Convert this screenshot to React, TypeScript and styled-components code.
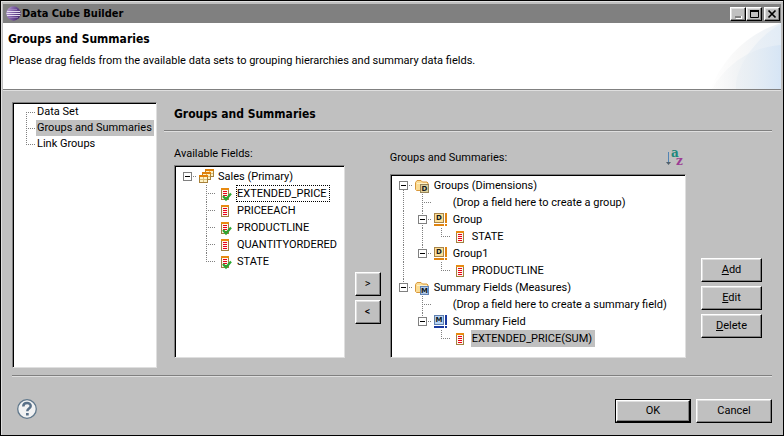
import React from 'react';
import styled, { createGlobalStyle, css } from 'styled-components';

const face = '#c0c0c0';
const shadow = '#808080';
const light = '#dfdfdf';
const headingFont = '"DejaVu Sans Condensed", "DejaVu Sans", sans-serif';

const GlobalStyle = createGlobalStyle`
  * { box-sizing: border-box; }
  body { margin: 0; }
  body, button { font-family: Roboto, sans-serif; font-size: 11px; line-height: 14px; color: #000; }
`;

const Window = styled.div`
  display: flex;
  flex-direction: column;
  min-height: 100vh;
  padding: 1px;
  background: ${face};
  border: 1px solid #000;
  box-shadow: inset 1px 1px 0 ${light};
`;

const TitleBar = styled.div`
  display: flex;
  align-items: center;
  height: 19px;
  margin: 2px 1px 0;
  padding: 0 1px 0 3px;
  background: ${shadow};
`;

const TitleText = styled.h1`
  flex: 1;
  margin: 0;
  padding-left: 1px;
  font: bold 11px/16px ${headingFont};
`;

const raised = css`
  background: ${face};
  border: 1px solid;
  border-color: #fff #000 #000 #fff;
  box-shadow: inset -1px -1px 0 ${shadow}, inset 1px 1px 0 ${light};
`;

const WindowButton = styled.button<{ $apart?: boolean }>`
  ${raised}
  display: grid;
  place-items: center;
  width: 16px;
  height: 14px;
  padding: 0;
  margin-left: ${p => (p.$apart ? 2 : 0)}px;
`;

const Banner = styled.header`
  display: flex;
  justify-content: space-between;
  height: 67px;
  margin: 0 1px;
  background: #fff;
  border-bottom: 1px solid ${shadow};
`;

const BannerText = styled.div`
  padding: 7px 0 0 5px;
`;

const Heading = styled.h2`
  margin: 0;
  font: bold 12px/18px ${headingFont};
`;

const BannerMessage = styled.p`
  margin: 6px 0 0;
  padding-left: 1px;
`;

const Body = styled.div`
  display: flex;
  flex: 1;
  margin: 0 1px;
  padding: 11px 9px 0;
  border-top: 1px solid ${light};
`;

const sunken = css`
  background: #fff;
  border: 1px solid;
  border-color: ${shadow} ${light} ${light} ${shadow};
  box-shadow: inset 1px 1px 0 #000;
`;

const NavPane = styled.nav`
  ${sunken}
  flex: 0 0 145px;
  min-width: 0;
  padding: 1px 0 1px 4px;
`;

const Page = styled.main`
  display: flex;
  flex-direction: column;
  flex: 1;
  margin-left: 7px;
`;

const PageHeading = styled.div`
  padding: 3px 10px 7px;
  border-bottom: 1px solid ${shadow};
  box-shadow: 0 1px 0 ${light};
`;

const PageContent = styled.div`
  display: flex;
  flex: 1;
  padding: 0 10px 10px;
`;

const Column = styled.section<{ $basis: number; $top: number }>`
  display: flex;
  flex-direction: column;
  flex: ${p => p.$basis} 1 ${p => p.$basis}px;
  padding-top: ${p => p.$top}px;
`;

const ColumnHeader = styled.div<{ $gap: number }>`
  display: flex;
  align-items: center;
  justify-content: space-between;
  margin-bottom: ${p => p.$gap}px;
  padding-right: 2px;
`;

const TreeBox = styled.div`
  ${sunken}
  flex: 1;
  padding: 2px 3px;
`;

const Row = styled.div<{ $height: number }>`
  display: flex;
  align-items: center;
  height: ${p => p.$height}px;
`;

type Guide = 'blank' | 'pass' | 'tee' | 'end' | 'root' | 'top';

const across = 'repeating-linear-gradient(90deg, #808080 0 1px, transparent 1px 2px)';
const down = 'repeating-linear-gradient(180deg, #808080 0 1px, transparent 1px 2px)';

const guideImage: Record<Guide, string> = {
  blank: 'none',
  pass: `${down} 9px 0 / 1px 100% no-repeat`,
  tee: `${down} 9px 0 / 1px 100% no-repeat, ${across} 9px 50% / 10px 1px no-repeat`,
  end: `${down} 9px 0 / 1px 50% no-repeat, ${across} 9px 50% / 10px 1px no-repeat`,
  root: `${across} 9px 50% / 10px 1px no-repeat`,
  top: `${down} 9px 100% / 1px 50% no-repeat, ${across} 9px 50% / 10px 1px no-repeat`,
};

const GuideCell = styled.span<{ $kind: Guide }>`
  display: flex;
  align-items: center;
  flex: 0 0 19px;
  height: 100%;
  padding-left: 5px;
  background: ${p => guideImage[p.$kind]};
`;

const Expander = styled.button`
  display: grid;
  place-items: center;
  width: 9px;
  height: 9px;
  padding: 0;
  background: #fff;
  border: 1px solid ${shadow};
  &::before { content: ''; width: 5px; height: 1px; background: #000; }
`;

const IconSlot = styled.span`
  display: flex;
  flex: 0 0 16px;
  margin: 0 2px;
`;

const Label = styled.span<{ $state?: 'selected' | 'focused' }>`
  display: flex;
  align-items: center;
  align-self: stretch;
  padding: 0 3px 0 1px;
  white-space: nowrap;
  background: ${p => (p.$state === 'selected' ? face : 'transparent')};
  outline: ${p => (p.$state === 'focused' ? '1px dotted #000' : 'none')};
  outline-offset: -1px;
`;

const NavLink = styled.a<{ $current?: boolean }>`
  padding: 1px 2px 1px 1px;
  white-space: nowrap;
  color: #000;
  text-decoration: none;
  background: ${p => (p.$current ? face : 'transparent')};
`;

const Transfer = styled.div`
  display: flex;
  flex-direction: column;
  gap: 4px;
  align-self: flex-start;
  padding: 141px 9px 0 10px;
`;

const Actions = styled.div`
  display: flex;
  flex-direction: column;
  gap: 4px;
  align-self: flex-start;
  padding: 127px 0 0 15px;
`;

const PushButton = styled.button<{ $width: number; $isDefault?: boolean }>`
  ${raised}
  width: ${p => p.$width}px;
  height: ${p => (p.$isDefault ? 22 : 24)}px;
  padding: 0;
`;

const DefaultFrame = styled.div`
  display: flex;
  border: 1px solid #000;
`;

const Footer = styled.footer`
  display: flex;
  align-items: flex-start;
  gap: 5px;
  margin: 7px 10px 0;
  padding: 23px 0 11px;
  border-top: 1px solid ${shadow};
  box-shadow: inset 0 1px 0 ${light};
`;

const IconButton = styled.button`
  display: flex;
  padding: 0;
  background: none;
  border: 0;
`;

const HelpButton = styled(IconButton)`
  margin: 0 auto 0 5px;
`;

const EclipseLogo = () => (
  <svg width="15" height="15" viewBox="0 0 15 15" aria-hidden="true">
    <defs>
      <linearGradient id="globe" x1="0" x2="1" y1="0" y2="0.3">
        <stop offset="0" stopColor="#c4b2dc" />
        <stop offset="0.4" stopColor="#8a6bb0" />
        <stop offset="1" stopColor="#4a2d74" />
      </linearGradient>
    </defs>
    <circle cx="7.5" cy="7.5" r="7.2" fill="url(#globe)" />
    <path d="M1 5.5h13M.5 7.5h14M1 9.5h13" stroke="#e4dcf0" />
    <path d="M3 3.5h8M3 11.5h9" stroke="#a78ec6" strokeWidth=".7" />
  </svg>
);

const BannerArt = () => (
  <svg width="75" height="66" viewBox="0 0 75 66" aria-hidden="true">
    <defs>
      <linearGradient id="fade" x1="0" x2="1" y1="0" y2="0">
        <stop offset="0" stopColor="#fff" />
        <stop offset="0.4" stopColor="#f8f8f8" />
        <stop offset="1" stopColor="#ebf1f7" />
      </linearGradient>
      <linearGradient id="inner" x1="0" x2="1" y1="0" y2="0">
        <stop offset="0" stopColor="#eff2f5" />
        <stop offset="1" stopColor="#e2ecf6" />
      </linearGradient>
      <linearGradient id="glow" x1="0" x2="1" y1="0" y2="0">
        <stop offset="0" stopColor="#f4f4f4" stopOpacity=".2" />
        <stop offset="0.5" stopColor="#e8eef3" stopOpacity=".7" />
        <stop offset="1" stopColor="#d6e5f5" />
      </linearGradient>
    </defs>
    <path d="M4 66C18 34 42 10 75 0v66z" fill="url(#fade)" />
    <path d="M30 66C28 46 50 14 75 1v65z" fill="url(#inner)" />
    <path d="M6 66C20 42 44 24 75 22v44z" fill="url(#glow)" />
  </svg>
);

const TablesIcon = () => (
  <svg width="16" height="16" viewBox="0 0 16 16" shapeRendering="crispEdges" aria-hidden="true">
    {[[6, 0], [3, 3], [0, 6]].map(([x, y]) => (
      <g key={x}>
        <rect x={x} y={y} width="9" height="8" fill="#a8823c" />
        <rect x={x + 1} y={y + 2} width="7" height="5" fill="#fff2c4" />
        <rect x={x} y={y} width="9" height="2" fill="#e08008" />
        <rect x={x + 1} y={y + 4} width="7" height="1" fill="#d8bc78" />
        <rect x={x + 4} y={y + 2} width="1" height="5" fill="#d8bc78" />
      </g>
    ))}
  </svg>
);

const FieldIcon = ({ checked = false }: { checked?: boolean }) => (
  <svg width="16" height="16" viewBox="0 0 16 16" shapeRendering="geometricPrecision" aria-hidden="true">
    <rect x="3" y="2" width="8" height="12" fill="#a08040" />
    <rect x="4" y="4" width="6" height="9" fill="#fff8ec" />
    <rect x="3" y="2" width="8" height="2" fill="#e88a10" />
    {[5, 7, 9, 11].map(y => <rect key={y} x="5" y={y} width="4" height="1" fill="#e8001c" />)}
    {checked && <path d="M5 10l3 3.500L13 7.500" fill="none" stroke="#2ba832" strokeWidth="2.2" />}
  </svg>
);

const LetterMark = ({ letter, x, y }: { letter: 'D' | 'M'; x: number; y: number }) => (
  <text x={x} y={y} fontFamily="DejaVu Sans, sans-serif" fontWeight="bold" fontSize="7" textAnchor="middle" fill="#101820">{letter}</text>
);

const FolderIcon = ({ letter }: { letter: 'D' | 'M' }) => (
  <svg width="16" height="16" viewBox="0 0 16 16" aria-hidden="true">
    <path d="M.5 11.5v-7l1.5-2h4l1.5 1.5h4.5l1 1v6.5l-1 1h-10.5z" fill="#fbdc94" stroke="#d8983c" />
    <path d="M2 5.5h10" stroke="#fff2c8" />
    <rect x="5.5" y="6.5" width="8" height="8" fill={letter === 'D' ? '#e0d09a' : '#b0c8e8'} stroke={letter === 'D' ? '#98865a' : '#6484b4'} />
    <LetterMark letter={letter} x={9.5} y={13} />
  </svg>
);

const LevelIcon = ({ letter }: { letter: 'D' | 'M' }) => {
  const warm = letter === 'D';
  const accent = warm ? '#e08410' : '#1838a0';
  return (
    <svg width="16" height="16" viewBox="0 0 16 16" aria-hidden="true">
      <rect x="0" y="1" width="10" height="10" fill={warm ? '#a88448' : '#6080b0'} />
      <rect x="1" y="2" width="8" height="8" fill={warm ? '#fbdf98' : '#b8d4f4'} />
      <path d="M0 13h10M12 1v10M11 13h2" stroke={accent} strokeWidth="2" />
      <LetterMark letter={letter} x={5} y={8} />
    </svg>
  );
};

const SortIcon = () => (
  <svg width="18" height="18" viewBox="0 0 18 18" overflow="visible" aria-hidden="true">
    <path d="M2.5 3v11" stroke="#5284b4" />
    <path d="M0 13h5l-2.5 3z" fill="#50606c" />
    <text x="5" y="8" fontFamily="DejaVu Serif, serif" fontSize="12" fontWeight="bold" fill="#20887c">a</text>
    <text x="10" y="16" fontFamily="DejaVu Serif, serif" fontSize="12" fontWeight="bold" fill="#9c3c94">z</text>
  </svg>
);

const HelpIcon = () => (
  <svg width="20" height="20" viewBox="0 0 20 20" aria-hidden="true">
    <circle cx="10" cy="10" r="9.3" fill="#f1f2f3" stroke="#60788c" strokeWidth="1.3" />
    <path d="M6.3 7.6C6.3 3 13.7 3 13.7 7c0 2.6-3.4 2.5-3.4 5.2" fill="none" stroke="#587088" strokeWidth="2.5" />
    <rect x="9" y="14" width="2.7" height="2.5" fill="#587088" />
  </svg>
);

const icons = {
  none: null,
  tables: <TablesIcon />,
  field: <FieldIcon />,
  usedField: <FieldIcon checked />,
  folderD: <FolderIcon letter="D" />,
  folderM: <FolderIcon letter="M" />,
  levelD: <LevelIcon letter="D" />,
  levelM: <LevelIcon letter="M" />,
};

type Node = {
  label: string;
  icon: keyof typeof icons;
  guides: Guide[];
  open?: boolean;
  state?: 'selected' | 'focused';
};

const fields: Node[] = [
  { label: 'Sales (Primary)', icon: 'tables', guides: ['root'], open: true },
  { label: 'EXTENDED_PRICE', icon: 'usedField', guides: ['blank', 'tee'], state: 'focused' },
  { label: 'PRICEEACH', icon: 'field', guides: ['blank', 'tee'] },
  { label: 'PRODUCTLINE', icon: 'usedField', guides: ['blank', 'tee'] },
  { label: 'QUANTITYORDERED', icon: 'field', guides: ['blank', 'tee'] },
  { label: 'STATE', icon: 'usedField', guides: ['blank', 'end'] },
];

const groups: Node[] = [
  { label: 'Groups (Dimensions)', icon: 'folderD', guides: ['top'], open: true },
  { label: '(Drop a field here to create a group)', icon: 'none', guides: ['pass', 'tee'] },
  { label: 'Group', icon: 'levelD', guides: ['pass', 'tee'], open: true },
  { label: 'STATE', icon: 'field', guides: ['pass', 'pass', 'end'] },
  { label: 'Group1', icon: 'levelD', guides: ['pass', 'end'], open: true },
  { label: 'PRODUCTLINE', icon: 'field', guides: ['pass', 'blank', 'end'] },
  { label: 'Summary Fields (Measures)', icon: 'folderM', guides: ['end'], open: true },
  { label: '(Drop a field here to create a summary field)', icon: 'none', guides: ['blank', 'tee'] },
  { label: 'Summary Field', icon: 'levelM', guides: ['blank', 'end'], open: true },
  { label: 'EXTENDED_PRICE(SUM)', icon: 'field', guides: ['blank', 'blank', 'end'], state: 'selected' },
];

const Tree = ({ nodes, label }: { nodes: Node[]; label: string }) => (
  <TreeBox role="tree" aria-labelledby={label}>
    {nodes.map(({ label: text, icon, guides, open, state }) => (
      <Row key={text} $height={17} role="treeitem">
        {guides.map((kind, i) => (
          <GuideCell key={i} $kind={kind}>
            {open && i === guides.length - 1 && <Expander aria-label={`Collapse ${text}`} />}
          </GuideCell>
        ))}
        <IconSlot>{icons[icon]}</IconSlot>
        <Label $state={state}>{text}</Label>
      </Row>
    ))}
  </TreeBox>
);

export default function App() {
  return (
    <Window>
      <GlobalStyle />
      <TitleBar>
        <EclipseLogo />
        <TitleText>Data Cube Builder</TitleText>
        <WindowButton aria-label="Minimize">
          <svg width="12" height="10" aria-hidden="true"><path d="M3 8h6" stroke="#808080" strokeWidth="2" /><path d="M4 9.5h6M9.5 7v3" stroke="#fff" /></svg>
        </WindowButton>
        <WindowButton aria-label="Maximize">
          <svg width="12" height="10" aria-hidden="true"><path d="M2.5 1.5h8v7h-8z" fill="none" stroke="#000" /><path d="M2 2h9" stroke="#000" strokeWidth="2" /></svg>
        </WindowButton>
        <WindowButton $apart aria-label="Close">
          <svg width="12" height="10" aria-hidden="true"><path d="M2.5 1.5l7 7M9.5 1.5l-7 7" stroke="#000" strokeWidth="1.7" /></svg>
        </WindowButton>
      </TitleBar>
      <Banner>
        <BannerText>
          <Heading>Groups and Summaries</Heading>
          <BannerMessage>Please drag fields from the available data sets to grouping hierarchies and summary data fields.</BannerMessage>
        </BannerText>
        <BannerArt />
      </Banner>
      <Body>
        <NavPane aria-label="Pages">
          <Row $height={16}><GuideCell $kind="top" /><NavLink href="#data-set">Data Set</NavLink></Row>
          <Row $height={16}><GuideCell $kind="tee" /><NavLink href="#groups" $current aria-current="page">Groups and Summaries</NavLink></Row>
          <Row $height={16}><GuideCell $kind="end" /><NavLink href="#link-groups">Link Groups</NavLink></Row>
        </NavPane>
        <Page>
          <PageHeading><Heading>Groups and Summaries</Heading></PageHeading>
          <PageContent>
            <Column $basis={171} $top={16}>
              <ColumnHeader $gap={4}><span id="available">Available Fields:</span></ColumnHeader>
              <Tree nodes={fields} label="available" />
            </Column>
            <Transfer>
              <PushButton $width={26} aria-label="Add to groups">&gt;</PushButton>
              <PushButton $width={26} aria-label="Remove from groups">&lt;</PushButton>
            </Transfer>
            <Column $basis={297} $top={18}>
              <ColumnHeader $gap={7}>
                <span id="summaries">Groups and Summaries:</span>
                <IconButton aria-label="Sort"><SortIcon /></IconButton>
              </ColumnHeader>
              <Tree nodes={groups} label="summaries" />
            </Column>
            <Actions>
              <PushButton $width={61}><u>A</u>dd</PushButton>
              <PushButton $width={61}><u>E</u>dit</PushButton>
              <PushButton $width={61}><u>D</u>elete</PushButton>
            </Actions>
          </PageContent>
        </Page>
      </Body>
      <Footer>
        <HelpButton aria-label="Help"><HelpIcon /></HelpButton>
        <DefaultFrame><PushButton $width={74} $isDefault>OK</PushButton></DefaultFrame>
        <PushButton $width={76}>Cancel</PushButton>
      </Footer>
    </Window>
  );
}
